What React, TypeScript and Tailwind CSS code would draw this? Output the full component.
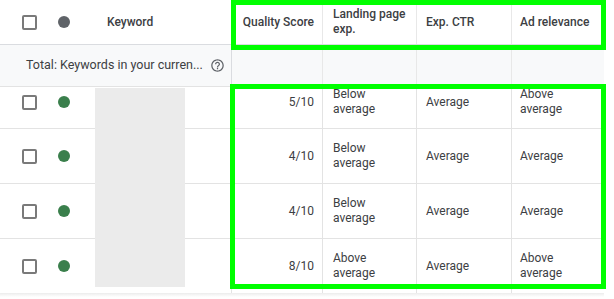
import React from "react";

const font = { fontFamily: "Roboto, 'Liberation Sans', Arial, sans-serif" };

function Checkbox() {
  return <div className="w-[15px] h-[15px] rounded-[2px] border-2 border-[#7a7a7a] bg-white shrink-0" />;
}

function Dot({ green }: { green?: boolean }) {
  return <div className={`w-[12px] h-[12px] rounded-full shrink-0 ${green ? "bg-[#3a7f4c]" : "bg-[#5f6368]"}`} />;
}

type R = { qs: string; lp: string[]; ctr: string[]; ar: string[] };

const rows: R[] = [
  { qs: "5/10", lp: ["Below", "average"], ctr: ["Average"], ar: ["Above", "average"] },
  { qs: "4/10", lp: ["Below", "average"], ctr: ["Average"], ar: ["Average"] },
  { qs: "4/10", lp: ["Below", "average"], ctr: ["Average"], ar: ["Average"] },
  { qs: "8/10", lp: ["Above", "average"], ctr: ["Average"], ar: ["Above", "average"] },
];

function Cell({ lines, className = "" }: { lines: string[]; className?: string }) {
  return (
    <div className={`flex flex-col justify-center h-full border-r border-[#e3e3e3] ${className}`}>
      {lines.map((l, i) => (
        <span key={i}>{l}</span>
      ))}
    </div>
  );
}

function DataRow({ r, first }: { r: R; first?: boolean }) {
  return (
    <div className={`flex h-[54px] text-[12px] leading-[15px] text-[#3c4043] ${first ? "-mt-[12px]" : ""}`}>
      <div className="w-[232px] flex items-center h-full relative">
        <div className="ml-[22px]"><Checkbox /></div>
        <div className="ml-[21px]"><Dot green /></div>
      </div>
      <div className="w-[91px] flex items-center justify-end pr-[8px] h-full border-r border-[#e3e3e3]">{r.qs}</div>
      <Cell lines={r.lp} className="w-[94px] pl-[10px]" />
      <Cell lines={r.ctr} className="w-[95px] pl-[9px]" />
      <Cell lines={r.ar} className="w-[92px] pl-[8px] border-r-0" />
    </div>
  );
}

export default function App() {
  return (
    <div className="relative w-[614px] h-[299px] bg-white overflow-hidden" style={font}>
      <div className="w-[604px] relative">
        {/* header */}
        <div className="flex h-[45px] border-b border-[#dadce0] text-[12px] leading-[15px] font-medium text-[#3c4043]">
          <div className="w-[232px] flex items-center">
            <div className="ml-[22px]"><Checkbox /></div>
            <div className="ml-[21px]"><Dot /></div>
            <span className="ml-[37px]">Keyword</span>
          </div>
          <div className="w-[91px] flex items-center justify-end pr-[8px] border-r border-[#e8e8e8]">Quality Score</div>
          <div className="w-[94px] flex flex-col justify-center pl-[10px] border-r border-[#e8e8e8]">
            <span>Landing page</span>
            <span>exp.</span>
          </div>
          <div className="w-[95px] flex items-center pl-[9px] border-r border-[#e8e8e8]">Exp. CTR</div>
          <div className="w-[92px] flex items-center pl-[8px]">Ad relevance</div>
        </div>
        {/* total */}
        <div className="flex h-[42px] bg-[#f8f9fa] border-b border-[#e3e3e3] text-[12.5px] text-[#3c4043]">
          <div className="w-[232px] flex items-center border-r border-[#dadce0]">
            <span className="ml-[26px] whitespace-nowrap">Total: Keywords in your curren...</span>
            <svg className="ml-auto mr-[6px] shrink-0" width="15" height="15" viewBox="0 0 24 24" fill="#5f6368">
              <path d="M11 18h2v-2h-2v2zm1-16C6.48 2 2 6.48 2 12s4.48 10 10 10 10-4.48 10-10S17.52 2 12 2zm0 18c-4.41 0-8-3.59-8-8s3.59-8 8-8 8 3.59 8 8-3.59 8-8 8zm0-14c-2.21 0-4 1.79-4 4h2c0-1.1.9-2 2-2s2 .9 2 2c0 2-3 1.75-3 5h2c0-2.25 3-2.5 3-5 0-2.21-1.79-4-4-4z" />
            </svg>
          </div>
          <div className="w-[91px] border-r border-[#e8e8e8]" />
          <div className="w-[94px] border-r border-[#e8e8e8]" />
          <div className="w-[95px] border-r border-[#e8e8e8]" />
          <div className="w-[92px]" />
        </div>
        {/* rows */}
        <div className="relative">
          <div className="h-[42px] overflow-hidden border-b border-[#e3e3e3]">
            <DataRow r={rows[0]} first />
          </div>
          {rows.slice(1).map((r, i) => (
            <div key={i} className={i < 2 ? "border-b border-[#e3e3e3]" : ""}>
              <DataRow r={r} />
            </div>
          ))}
          <div className="absolute left-[95px] top-[1px] w-[90px] h-[199px] bg-[#ebebeb]" />
          <div className="absolute left-[231px] top-0 bottom-0 w-[1px] bg-[#e3e3e3]" />
        </div>
        <div className="h-[4px] bg-gradient-to-b from-[#ececec] to-white" />
      </div>
      {/* annotation boxes */}
      <div className="absolute left-[231px] top-0 w-[375px] h-[50px] border-[5px] border-[#00ff00]" />
      <div className="absolute left-[230px] top-[84px] w-[376px] h-[205px] border-[5px] border-[#00ff00]" />
    </div>
  );
}
